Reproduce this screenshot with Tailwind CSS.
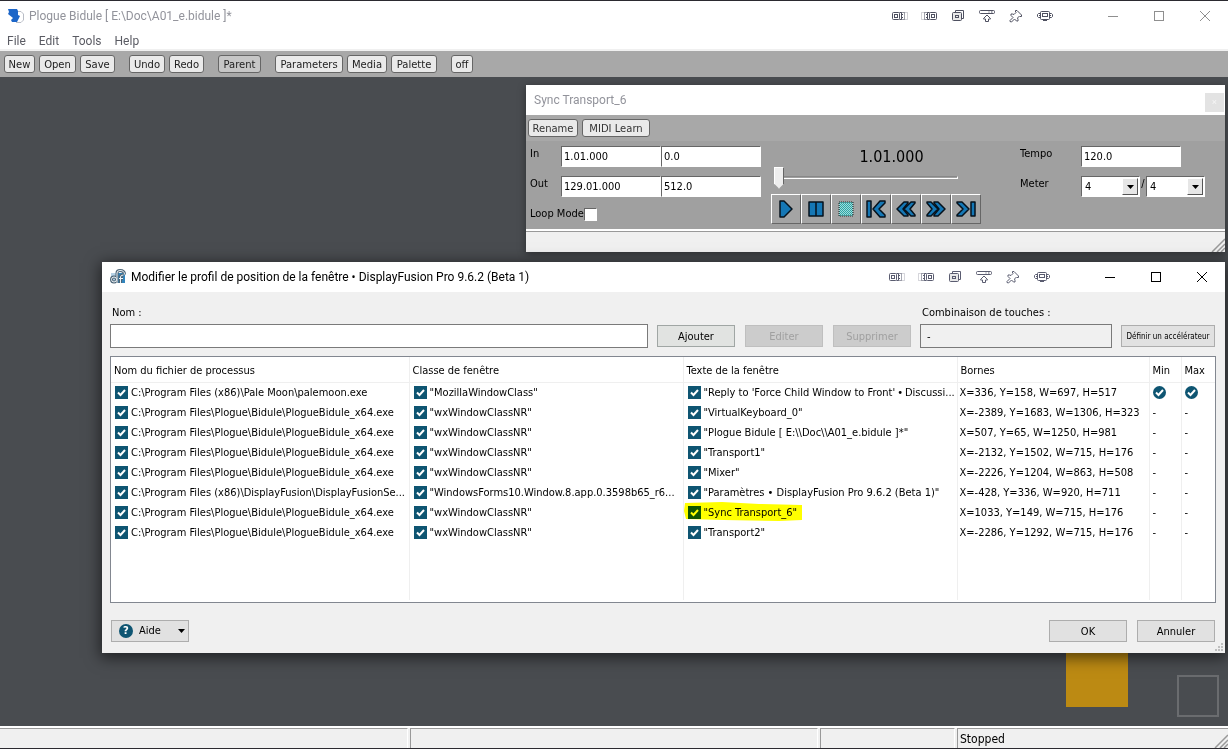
<!DOCTYPE html>
<html lang="fr">
<head>
<meta charset="utf-8">
<meta name="viewport" content="width=device-width, initial-scale=1">
<title>Plogue Bidule</title>
<script src="https://cdn.jsdelivr.net/npm/@tailwindcss/browser@4"></script>
</head>
<body class="h-screen overflow-hidden bg-[#494c50] font-['DejaVu_Sans_Condensed','DejaVu_Sans',sans-serif] text-[11px] leading-4 text-black">

<!-- Shared icons -->
<svg class="hidden">
  <symbol id="i-left" viewBox="0 0 16 16"><g fill="none" stroke="currentColor"><path d="M11.500 4.500h4v7h-4" opacity=".25"/><path d="M8.500 4.500h4v7h-4" opacity=".55"/><path d="M7.500 4.500h2v7h-2M11 6.500H9.500v3H11"/><rect x=".5" y="4.500" width="7" height="7" rx="1"/><rect x="2.500" y="6.500" width="3" height="3"/></g></symbol>
  <symbol id="i-right" viewBox="0 0 16 16"><use href="#i-left" transform="translate(16) scale(-1 1)"/></symbol>
  <symbol id="i-stack" viewBox="0 0 16 16"><g fill="none" stroke="currentColor"><path d="M5.500 4.500V2.500h8v8h-2"/><rect x="2.500" y="4.500" width="9" height="8" rx="1" fill="#e8e8e8"/><rect x="5.500" y="7.500" width="3" height="2"/></g></symbol>
  <symbol id="i-roll" viewBox="0 0 16 16"><g fill="none" stroke="currentColor"><rect x=".5" y="2.500" width="15" height="3" rx="1"/><path d="M8 7l3.500 3.500v.5H9.500v2.500h-3V11h-2v-.5z"/><path d="M9.500 4h1M12 4h1.500"/></g></symbol>
  <symbol id="i-pin" viewBox="0 0 16 16"><path d="M7.500 2.500h1.500l4.500 4.500v1.500h-1.500l-.5-.5-2 2 .5 1.500v1.500H8.500L6.500 11l-3 3-1.500-.5v-1l3-3-2-2V6h1.500L6 6.500l2-2-.5-.5z" fill="none" stroke="currentColor" stroke-linejoin="round"/></symbol>
  <symbol id="i-mon" viewBox="0 0 16 16"><g fill="none" stroke="currentColor"><rect x="3.500" y="3.500" width="9" height="8" rx="1"/><rect x="5.500" y="5.500" width="5" height="3"/><path d="M3.500 5.500h-2l-1 1v2l1 1h2M12.500 5.500h2l1 1v2l-1 1h-2M6 12.500h4M2 7.500h1M13 7.500h1"/></g></symbol>
  <symbol id="i-check" viewBox="0 0 13 13"><path d="M3 6.500l2.500 2.500L10 4" fill="none" stroke="#fff" stroke-width="2"/></symbol>
  <symbol id="i-grip" viewBox="0 0 14 14"><path d="M1 14L14 1M6 14l8-8M10 14l4-4" fill="none" stroke="#999" stroke-width="1.500"/></symbol>
</svg>

<div class="flex h-full flex-col border-y border-[#2b2a30]">
  <!-- Main title bar -->
  <header class="flex h-[29px] shrink-0 items-center bg-white pl-2 font-[Roboto,sans-serif] text-xs text-[#92939b]">
    <svg class="mr-[5px] size-4" viewBox="0 0 16 16"><path d="M9 3.500h4l2.500 2.500v6L13 14.500H8" fill="#fff" stroke="#b9bdc6"/><path d="M0 1h9l1 2v4l2 1-3 6H4l-1-2 2-2-5-4 1-2z" fill="#1d66c8"/></svg>
    <h1 class="flex-1 whitespace-nowrap">Plogue Bidule [ E:\Doc\A01_e.bidule ]*</h1>
    <div class="flex gap-[13px] pr-[37px] text-[#4e5060]">
      <button aria-label="Gauche"><svg class="size-4"><use href="#i-left"/></svg></button>
      <button aria-label="Droite"><svg class="size-4"><use href="#i-right"/></svg></button>
      <button aria-label="Empiler"><svg class="size-4"><use href="#i-stack"/></svg></button>
      <button aria-label="Enrouler"><svg class="size-4"><use href="#i-roll"/></svg></button>
      <button aria-label="Épingler"><svg class="size-4"><use href="#i-pin"/></svg></button>
      <button aria-label="Moniteur"><svg class="size-4"><use href="#i-mon"/></svg></button>
    </div>
    <div class="flex text-[#8f8f8f]">
      <button aria-label="Réduire" class="grid w-[46px] place-items-center"><svg class="size-3" viewBox="0 0 12 12"><path d="M1 6.500h10" stroke="currentColor"/></svg></button>
      <button aria-label="Agrandir" class="grid w-[46px] place-items-center"><svg class="size-3" viewBox="0 0 12 12"><rect x="1.500" y="1.500" width="9" height="9" fill="none" stroke="currentColor"/></svg></button>
      <button aria-label="Fermer" class="grid w-[46px] place-items-center"><svg class="size-3" viewBox="0 0 12 12"><path d="M1 1l10 10M11 1L1 11" stroke="currentColor"/></svg></button>
    </div>
  </header>
  <nav class="flex h-[21px] shrink-0 items-center gap-[13px] border-b-2 border-[#f0f0f0] bg-white pt-0.5 pl-[7px] font-[Roboto,sans-serif] text-xs text-[#5a5b63]">
    <a href="#">File</a><a href="#">Edit</a><a href="#">Tools</a><a href="#">Help</a>
  </nav>
  <!-- Toolbar -->
  <div class="flex h-[26px] shrink-0 items-center gap-1 bg-[#a8a8a8] pl-1 font-['DejaVu_Sans',sans-serif] text-[10px] text-[#222]">
    <button class="h-[18px] w-[31px] rounded-[3px] border border-[#666] bg-[#eaeaea] pt-px leading-4">New</button>
    <button class="h-[18px] w-[37px] rounded-[3px] border border-[#666] bg-[#eaeaea] pt-px leading-4">Open</button>
    <button class="h-[18px] w-[35px] rounded-[3px] border border-[#666] bg-[#eaeaea] pt-px leading-4">Save</button>
    <button class="ml-[10px] h-[18px] w-9 rounded-[3px] border border-[#666] bg-[#eaeaea] pt-px leading-4">Undo</button>
    <button class="h-[18px] w-[35px] rounded-[3px] border border-[#666] bg-[#eaeaea] pt-px leading-4">Redo</button>
    <button class="ml-[10px] h-[18px] w-[43px] rounded-[3px] border border-[#666] bg-[#c6c6c6] pt-px leading-4">Parent</button>
    <button class="ml-[10px] h-[18px] w-[68px] rounded-[3px] border border-[#666] bg-[#eaeaea] pt-px leading-4">Parameters</button>
    <button class="h-[18px] w-10 rounded-[3px] border border-[#666] bg-[#eaeaea] pt-px leading-4">Media</button>
    <button class="h-[18px] w-[46px] rounded-[3px] border border-[#666] bg-[#eaeaea] pt-px leading-4">Palette</button>
    <button class="ml-[10px] h-[18px] w-[22px] rounded-[3px] border border-[#666] bg-[#eaeaea] pt-px leading-4">off</button>
  </div>

  <!-- Canvas with floating windows -->
  <main class="relative min-h-0 flex-1 bg-[#494c50]">
    <div class="absolute top-[560px] right-[100px] h-[70px] w-[62px] bg-[#bc8a13]"></div>
    <div class="absolute top-[598px] right-[9px] h-[42px] w-[42px] border-2 border-[#6a6c6f]"></div>

    <!-- Transport window -->
    <section class="absolute top-2 right-[3px] left-[526px] shadow-[0_2px_8px_rgba(0,0,0,0.4)]">
      <div class="flex h-[30px] items-center justify-between bg-white pl-2 font-[Roboto,sans-serif] text-xs text-[#92939b]">
        <h2>Sync Transport_6</h2>
        <button aria-label="Fermer" class="mt-1 mr-px grid size-[19px] place-items-center bg-[#e3e3e3] text-[9px] text-[#f6f6f6]">×</button>
      </div>
      <div class="flex h-[26px] items-center gap-1 bg-[#a8a8a8] pl-[2px] font-['DejaVu_Sans',sans-serif] text-[10px] text-[#333]">
        <button class="h-[18px] w-[50px] rounded-[3px] border border-[#666] bg-[#eaeaea] pt-px leading-4">Rename</button>
        <button class="h-[18px] w-[68px] rounded-[3px] border border-[#666] bg-[#eaeaea] pt-px leading-4">MIDI Learn</button>
      </div>
      <div class="flex h-[88px] items-start bg-[#a0a0a0] pl-1">
        <div class="w-[241px] shrink-0 pt-[5px]">
          <div class="flex h-[30px]">
            <label for="in1" class="w-[31px]">In</label>
            <input id="in1" value="1.01.000" class="h-[21px] w-[100px] border border-t-[#666] border-r-white border-b-white border-l-[#666] bg-white pl-0.5">
            <input aria-label="In beats" value="0.0" class="h-[21px] w-[100px] border border-t-[#666] border-r-white border-b-white border-l-[#666] bg-white pl-0.5">
          </div>
          <div class="flex h-[30px]">
            <label for="out1" class="w-[31px]">Out</label>
            <input id="out1" value="129.01.000" class="h-[21px] w-[100px] border border-t-[#666] border-r-white border-b-white border-l-[#666] bg-white pl-0.5">
            <input aria-label="Out beats" value="512.0" class="h-[21px] w-[100px] border border-t-[#666] border-r-white border-b-white border-l-[#666] bg-white pl-0.5">
          </div>
          <label class="flex items-center">Loop Mode<input type="checkbox" class="size-[13px] appearance-none border border-t-[#666] border-r-white border-b-white border-l-[#666] bg-white"></label>
        </div>
        <div class="w-[210px] shrink-0">
          <output class="block pt-[6px] pl-[31px] text-center text-base leading-5">1.01.000</output>
          <div class="relative h-[27px]">
            <div class="absolute top-[9px] left-2 h-[3px] w-[179px] border-t border-r border-b border-t-[#888] border-r-white border-b-white"></div>
            <input type="range" value="0" aria-label="Position" class="absolute top-[-1px] left-[3px] h-[23px] w-[184px] appearance-none bg-transparent [&::-webkit-slider-thumb]:h-[22px] [&::-webkit-slider-thumb]:w-[10px] [&::-webkit-slider-thumb]:appearance-none [&::-webkit-slider-thumb]:border [&::-webkit-slider-thumb]:border-white [&::-webkit-slider-thumb]:border-r-[#666] [&::-webkit-slider-thumb]:bg-[#eeeeee] [&::-webkit-slider-thumb]:[clip-path:polygon(0_0,100%_0,100%_77%,50%_100%,0_77%)]">
          </div>
          <div id="transport" class="flex"></div>
        </div>
        <div class="ml-[39px] grid grid-cols-[61px_124px] gap-y-[9px] pt-[5px]">
          <label for="tempo">Tempo</label>
          <input id="tempo" value="120.0" class="h-[21px] w-[100px] border border-t-[#666] border-r-white border-b-white border-l-[#666] bg-white pl-0.5">
          <label for="m1">Meter</label>
          <div class="flex">
            <div class="relative">
              <select id="m1" class="h-[21px] w-[59px] appearance-none border border-t-[#666] border-r-white border-b-white border-l-[#666] bg-white pl-[3px]"><option>4</option></select>
              <span class="pointer-events-none absolute top-0.5 right-0.5 grid h-[17px] w-4 place-items-center border border-t-white border-r-[#555] border-b-[#555] border-l-white bg-[#e6e6e6]"><svg class="h-1 w-[7px]" viewBox="0 0 7 4"><path d="M0 0h7L3.500 4z"/></svg></span>
            </div>
            <span class="w-[6px] text-center">/</span>
            <div class="relative">
              <select aria-label="Meter denominator" class="h-[21px] w-[59px] appearance-none border border-t-[#666] border-r-white border-b-white border-l-[#666] bg-white pl-[3px]"><option>4</option></select>
              <span class="pointer-events-none absolute top-0.5 right-0.5 grid h-[17px] w-4 place-items-center border border-t-white border-r-[#555] border-b-[#555] border-l-white bg-[#e6e6e6]"><svg class="h-1 w-[7px]" viewBox="0 0 7 4"><path d="M0 0h7L3.500 4z"/></svg></span>
            </div>
          </div>
        </div>
      </div>
      <div class="border-t-2 border-white bg-[#f0f0f0]"><div class="flex h-[21px] items-end justify-end border-t border-[#999]"><svg class="size-[14px]"><use href="#i-grip"/></svg></div></div>
    </section>

    <!-- Window profile dialog -->
    <section role="dialog" aria-labelledby="dlg" class="absolute top-[185px] right-[3px] left-[102px] bg-[#f0f0f0] shadow-[0_3px_14px_2px_rgba(0,0,0,0.55)]">
      <header class="flex h-[30px] items-center bg-white pl-2 font-[Roboto,sans-serif] text-xs">
        <svg class="mr-[5px] size-4" viewBox="0 0 16 16"><rect x="1" y="4" width="13" height="10" fill="#b7d2e6"/><path d="M8 4h7v10H8z" fill="#3285bd"/><g fill="none" stroke="#4d6577" stroke-width="3"><circle cx="4" cy="10.500" r="2.500"/><path d="M7 14V4q0-2.500 3-2.500 4.500 0 4.500 4M10.500 14V8q0-2 3-2M9 9.500h4"/></g><g fill="none" stroke="#eef4f8"><circle cx="4" cy="10.500" r="2.500"/><path d="M7 14V4q0-2.500 3-2.500 4.500 0 4.500 4M10.500 14V8q0-2 3-2M9 9.500h4"/></g></svg>
        <h2 id="dlg" class="flex-1 whitespace-nowrap">Modifier le profil de position de la fenêtre • DisplayFusion Pro 9.6.2 (Beta 1)</h2>
        <div class="flex gap-[13px] pr-[37px] text-[#5a5c70]">
          <button aria-label="Gauche"><svg class="size-4"><use href="#i-left"/></svg></button>
          <button aria-label="Droite"><svg class="size-4"><use href="#i-right"/></svg></button>
          <button aria-label="Empiler"><svg class="size-4"><use href="#i-stack"/></svg></button>
          <button aria-label="Enrouler"><svg class="size-4"><use href="#i-roll"/></svg></button>
          <button aria-label="Épingler"><svg class="size-4"><use href="#i-pin"/></svg></button>
          <button aria-label="Moniteur"><svg class="size-4"><use href="#i-mon"/></svg></button>
        </div>
        <div class="flex">
          <button aria-label="Réduire" class="grid w-[46px] place-items-center"><svg class="size-3" viewBox="0 0 12 12"><path d="M1 6.500h10" stroke="currentColor"/></svg></button>
          <button aria-label="Agrandir" class="grid w-[46px] place-items-center"><svg class="size-3" viewBox="0 0 12 12"><rect x="1.500" y="1.500" width="9" height="9" fill="none" stroke="currentColor"/></svg></button>
          <button aria-label="Fermer" class="grid w-[46px] place-items-center"><svg class="size-3" viewBox="0 0 12 12"><path d="M1 1l10 10M11 1L1 11" stroke="currentColor"/></svg></button>
        </div>
      </header>
      <div class="pt-[13px] pr-[9px] pb-[11px] pl-2">
        <div class="flex items-end pr-px">
          <div class="flex-1"><label for="nom" class="mb-[3px] block pl-0.5">Nom :</label><input id="nom" class="block h-6 w-full border border-[#7a7a7a] bg-white px-1"></div>
          <button class="mb-px ml-[9px] h-[22px] w-[78px] border border-[#a0a6a4] bg-[#e1e3e1] pt-0.5">Ajouter</button>
          <button disabled class="mb-px ml-[10px] h-[22px] w-[78px] border border-[#bfbfbf] bg-[#cccccc] pt-0.5 text-[#a0a0a0]">Editer</button>
          <button disabled class="mb-px ml-[10px] h-[22px] w-[78px] border border-[#bfbfbf] bg-[#cccccc] pt-0.5 text-[#a0a0a0]">Supprimer</button>
          <div class="ml-[9px] w-48"><label for="combo" class="mb-[3px] block pl-0.5 whitespace-nowrap">Combinaison de touches :</label><input id="combo" readonly value="-" class="block h-6 w-full border border-[#7a7a7a] bg-[#f0f0f0] px-1.5"></div>
          <button class="mb-px ml-[9px] h-[22px] w-[94px] border border-[#adadad] bg-[#e1e1e1] pt-0.5 text-[8px] whitespace-nowrap">Définir un accélérateur</button>
        </div>

        <div class="mt-2 h-[247px] border border-[#828790] bg-white">
          <table class="h-[243px] w-full table-fixed border-collapse text-left whitespace-nowrap">
            <colgroup><col class="w-[298px]"><col class="w-[274px]"><col class="w-[274px]"><col class="w-[192px]"><col class="w-8"><col></colgroup>
            <thead><tr class="h-[25px] border-b border-[#efefef]">
              <th class="border-r border-[#efefef] p-0 pt-[3px] pl-[3px] font-normal">Nom du fichier de processus</th>
              <th class="border-r border-[#efefef] p-0 pt-[3px] pl-[3px] font-normal">Classe de fenêtre</th>
              <th class="border-r border-[#efefef] p-0 pt-[3px] pl-[3px] font-normal">Texte de la fenêtre</th>
              <th class="border-r border-[#efefef] p-0 pt-[3px] pl-[3px] font-normal">Bornes</th>
              <th class="border-r border-[#efefef] p-0 pt-[3px] pl-[3px] font-normal">Min</th>
              <th class="p-0 pt-[3px] pl-[3px] font-normal">Max</th>
            </tr></thead>
            <tbody id="rows"></tbody>
          </table>
        </div>

        <div class="mt-[17px] flex items-center gap-[10px] px-px">
          <button class="mr-auto flex h-[22px] w-[78px] items-center border border-[#adadad] bg-[#e1e1e1] pr-[3px] pl-[7px]">
            <span class="mr-[6px] grid size-[14px] place-items-center rounded-full bg-[#0e5572] font-['DejaVu_Sans',sans-serif] text-[10px] leading-none font-bold text-white">?</span>Aide
            <svg class="ml-auto h-1 w-[7px]" viewBox="0 0 7 4"><path d="M0 0h7L3.500 4z"/></svg>
          </button>
          <button class="h-[22px] w-[78px] border border-[#adadad] bg-[#e1e1e1] pt-0.5">OK</button>
          <button class="h-[22px] w-[78px] border border-[#adadad] bg-[#e1e1e1] pt-0.5">Annuler</button>
        </div>
      </div>
      <svg class="absolute right-0.5 bottom-0.5 size-2" viewBox="0 0 8 8"><path d="M6 0h2v2H6zM3 3h2v2H3zM6 3h2v2H6zM0 6h2v2H0zM3 6h2v2H3zM6 6h2v2H6z" fill="#bfbfbf"/></svg>
    </section>
  </main>

  <!-- Status bar -->
  <footer class="flex h-[22px] shrink-0 gap-0.5 border-t-2 border-white bg-[#f0f0f0] text-xs">
    <div class="flex-1 border-t border-r border-t-[#999] border-r-white"></div>
    <div class="flex-1 border-t border-r border-l border-t-[#999] border-r-white border-l-[#999]"></div>
    <div class="w-[135px] border-t border-r border-l border-t-[#999] border-r-white border-l-[#999]"></div>
    <div class="flex w-[271px] items-center justify-between border-t border-l border-[#999] pl-[2px]">Stopped<svg class="size-[14px] self-end"><use href="#i-grip"/></svg></div>
  </footer>
</div>

<script>
const bid = 'C:\\Program Files\\Plogue\\Bidule\\PlogueBidule_x64.exe', wx = '"wxWindowClassNR"';
const data = [
  ['C:\\Program Files (x86)\\Pale Moon\\palemoon.exe', '"MozillaWindowClass"', '"Reply to \'Force Child Window to Front\'&thinsp;•&thinsp;Discussi...', 'X=336, Y=158, W=697, H=517', 1],
  [bid, wx, '"VirtualKeyboard_0"', 'X=-2389, Y=1683, W=1306, H=323'],
  [bid, wx, '"Plogue Bidule [ E:\\\\Doc\\\\A01_e.bidule ]*"', 'X=507, Y=65, W=1250, H=981'],
  [bid, wx, '"Transport1"', 'X=-2132, Y=1502, W=715, H=176'],
  [bid, wx, '"Mixer"', 'X=-2226, Y=1204, W=863, H=508'],
  ['C:\\Program Files (x86)\\DisplayFusion\\DisplayFusionSe...', '"WindowsForms10.Window.8.app.0.3598b65_r6...', '"Paramètres • DisplayFusion Pro 9.6.2 (Beta 1)"', 'X=-428, Y=336, W=920, H=711'],
  [bid, wx, '"Sync Transport_6"', 'X=1033, Y=149, W=715, H=176'],
  [bid, wx, '"Transport2"', 'X=-2286, Y=1292, W=715, H=176'],
];
const mark = '<svg class="pointer-events-none absolute top-[-1px] left-0 h-5 w-[120px] mix-blend-multiply" viewBox="0 0 120 20"><path d="M1 1L38 0 75 2 118 3V18L95 19 40 18 2 17 0 9z" fill="#ff0"/></svg>';
const cell = (t, hl) => `<td class="relative border-r border-[#efefef] p-0 pl-1"><label class="flex h-5 items-center gap-[3px]"><span class="grid size-[13px] shrink-0"><input type="checkbox" checked class="col-start-1 row-start-1 size-[13px] appearance-none bg-[#0e5572]"><svg class="pointer-events-none col-start-1 row-start-1 size-[13px]"><use href="#i-check"/></svg></span><span class="pt-px">${t}</span></label>${hl ? mark : ''}</td>`;
const round = '<svg class="size-[13px]" viewBox="0 0 13 13"><circle cx="6.500" cy="6.500" r="6.500" fill="#0e5572"/><use href="#i-check" width="13" height="13"/></svg>';
rows.innerHTML = data.map((r, i) => `<tr class="h-5">${cell(r[0])}${cell(r[1])}${cell(r[2], i === 6)}<td class="border-r border-[#efefef] p-0 pt-px pl-0.5">${r[3]}</td><td class="border-r border-[#efefef] p-0 pl-[3px]">${r[4] ? round : '-'}</td><td class="p-0 pl-[3px]">${r[4] ? round : '-'}</td></tr>`).join('')
  + '<tr><td class="border-r border-[#efefef]"></td><td class="border-r border-[#efefef]"></td><td class="border-r border-[#efefef]"></td><td class="border-r border-[#efefef]"></td><td class="border-r border-[#efefef]"></td><td></td></tr>';

const icons = {
  Play: '<path d="M4 2h4l8 8-8 8H4z"/>',
  Pause: '<path d="M3 3h7v14H3zM10 3h7v14h-7z"/>',
  Stop: '<rect x="3" y="3" width="14" height="14" fill="url(#dots)" stroke="#222" stroke-width="1" stroke-dasharray="1 1"/>',
  Start: '<path d="M1 2h4v16H1z"/><path d="M7 10L14 2h5v2l-6 6 6 6v2h-5z"/>',
  Rewind: '<path d="M1 10L8 3h4v1l-5 6 5 6v1H8z"/><path d="M8 10L15 3h4v1l-5 6 5 6v1h-4z"/>',
  Forward: '<path d="M19 10L12 3H8v1l5 6-5 6v1h4z"/><path d="M12 10L5 3H1v1l5 6-5 6v1h4z"/>',
  End: '<path d="M15 3h4v14h-4z"/><path d="M13 10L6 3H1v1l6 6-6 6v1h5z"/>',
};
transport.innerHTML = '<svg class="absolute size-0"><pattern id="dots" width="2" height="2" patternUnits="userSpaceOnUse"><rect width="2" height="2" fill="#2fa5a5"/><path d="M0 0h1v1H0zM1 1h1v1H1z" fill="#9fdcdc"/></pattern></svg>'
  + Object.entries(icons).map(([n, p]) => `<button aria-label="${n}" class="grid size-[30px] place-items-center border border-t-white border-r-[#666] border-b-[#666] border-l-white bg-[#a4a4a4]"><svg class="size-5" viewBox="0 0 20 20"><g fill="#1577b5" stroke="#06121c" stroke-width="1.500" stroke-linejoin="round">${p}</g></svg></button>`).join('');
</script>
</body>
</html>
